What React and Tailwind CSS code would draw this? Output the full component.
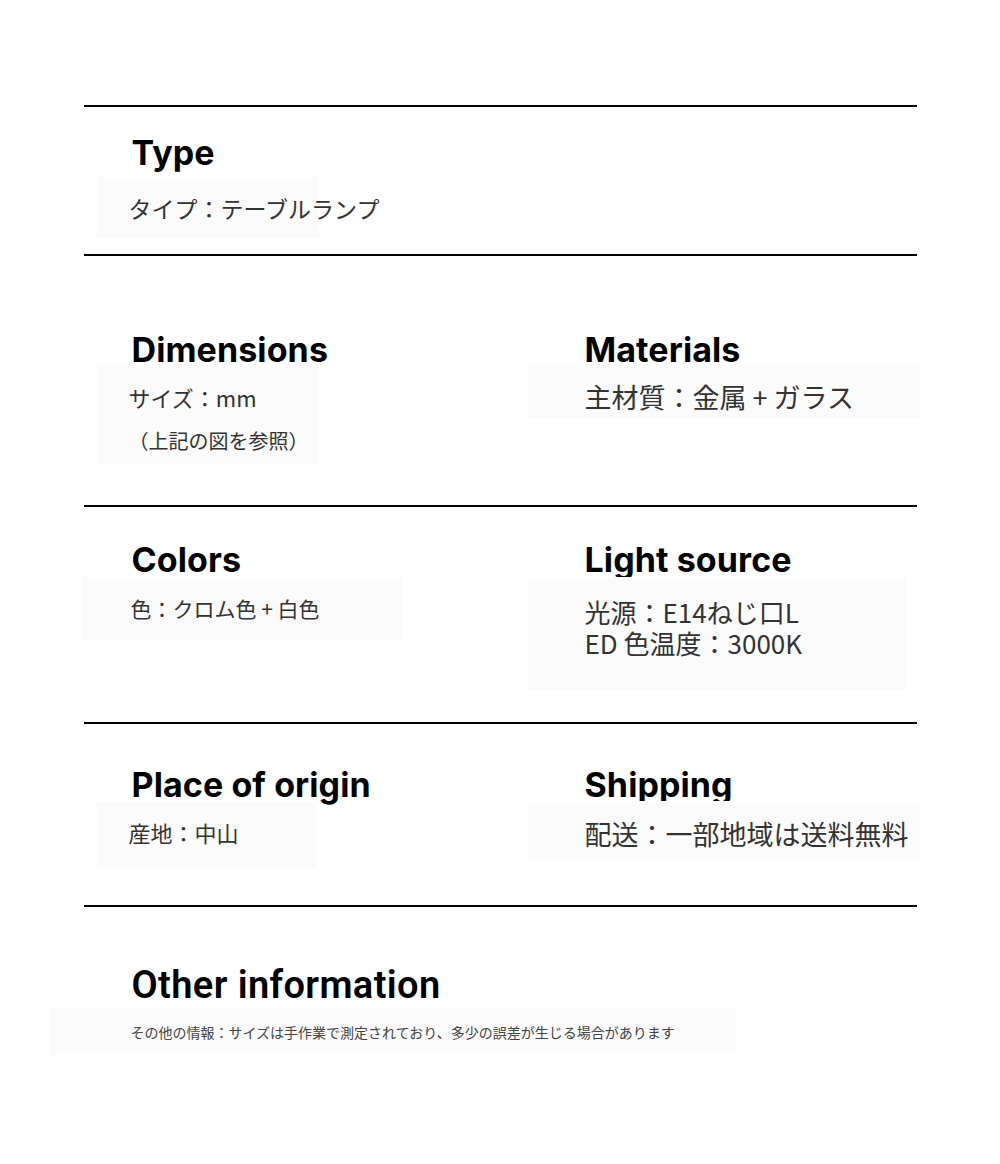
import React from "react";

const heading = "font-['Inter',sans-serif] font-bold text-[34px] leading-[34px] text-black tracking-[0.1px] whitespace-nowrap";
const jp = "font-['Noto_Sans_CJK_JP','Noto_Sans',sans-serif] text-[#333] whitespace-nowrap";

const Spec = () => {
  return (
    <div className="w-full bg-white pt-[105px] pb-[110px]">
      <div className="w-[833px] mx-auto">
        {/* Type */}
        <section className="border-t-2 border-black pt-[29px] pb-[16px]">
          <h3 className={`${heading} pl-[48px]`}>Type</h3>
          <div className="ml-[13px] mt-[7px] w-[222px] h-[61px] bg-[#fbfbfb] pl-[32px] flex items-center">
            <p className={`${jp} text-[23px] leading-none pt-[2px]`}>タイプ：テーブルランプ</p>
          </div>
        </section>

        {/* Dimensions / Materials */}
        <section className="border-t-2 border-black pt-[77px] pb-[41px] grid grid-cols-[453px_1fr]">
          <div>
            <h3 className={`${heading} pl-[48px]`}>Dimensions</h3>
            <div className="ml-[13px] w-[222px] h-[97px] bg-[#fbfbfb] pl-[32px] pt-[17px]">
              <p className={`${jp} text-[22px] leading-[26px]`}>サイズ：mm</p>
              <p className={`${jp} text-[20px] leading-[26px] mt-[18px]`}>（上記の図を参照）</p>
            </div>
          </div>
          <div>
            <h3 className={`${heading} pl-[48px]`}>Materials</h3>
            <div className="-ml-[9px] w-[392px] h-[51px] bg-[#fbfbfb] pl-[57px] flex items-center">
              <p className={`${jp} text-[27px] leading-none pt-[8px]`}>主材質：金属 + ガラス</p>
            </div>
          </div>
        </section>

        {/* Colors / Light source */}
        <section className="border-t-2 border-black pt-[36px] pb-[32px] grid grid-cols-[453px_1fr]">
          <div>
            <h3 className={`${heading} pl-[48px]`}>Colors</h3>
            <div className="-ml-[3px] w-[320px] h-[63px] bg-[#fbfbfb] pl-[50px] pt-[21px]">
              <p className={`${jp} text-[21px] leading-none`}>色：クロム色 + 白色</p>
            </div>
          </div>
          <div>
            <h3 className={`${heading} pl-[48px] h-[34px] overflow-hidden`}>Light source</h3>
            <div className="-ml-[9px] w-[378px] h-[113px] bg-[#fbfbfb] pl-[57px] pt-[19px]">
              <p className={`${jp} text-[26px] leading-[31px]`}>光源：E14ねじ口L</p>
              <p className={`${jp} text-[26px] leading-[31px]`}>ED 色温度：3000K</p>
            </div>
          </div>
        </section>

        {/* Place of origin / Shipping */}
        <section className="border-t-2 border-black pt-[44px] pb-[36px] grid grid-cols-[453px_1fr]">
          <div>
            <h3 className={`${heading} pl-[48px]`}>Place of origin</h3>
            <div className="ml-[13px] w-[219px] h-[67px] bg-[#fbfbfb] pl-[32px] flex items-center">
              <p className={`${jp} text-[22px] leading-none pb-[7px]`}>産地：中山</p>
            </div>
          </div>
          <div>
            <h3 className={`${heading} pl-[48px] h-[33px] overflow-hidden`}>Shipping</h3>
            <div className="-ml-[9px] w-[392px] h-[62px] bg-[#fbfbfb] pl-[57px] flex items-center">
              <p className={`${jp} text-[27px] leading-none pt-[2px]`}>配送：一部地域は送料無料</p>
            </div>
          </div>
        </section>

        {/* Other information */}
        <section className="border-t-2 border-black pt-[59px]">
          <h3 className="font-['Roboto',sans-serif] font-semibold text-[38px] leading-[38px] text-black pl-[48px] tracking-[0.4px] whitespace-nowrap">
            Other information
          </h3>
          <div className="-ml-[35px] mt-[4px] w-[687px] h-[47px] bg-[#fbfbfb] pl-[82px] flex items-center">
            <p className={`${jp} text-[14px] leading-none text-[#444]`}>
              その他の情報：サイズは手作業で測定されており、多少の誤差が生じる場合があります
            </p>
          </div>
        </section>
      </div>
    </div>
  );
};

export default function App() {
  return <Spec />;
}
